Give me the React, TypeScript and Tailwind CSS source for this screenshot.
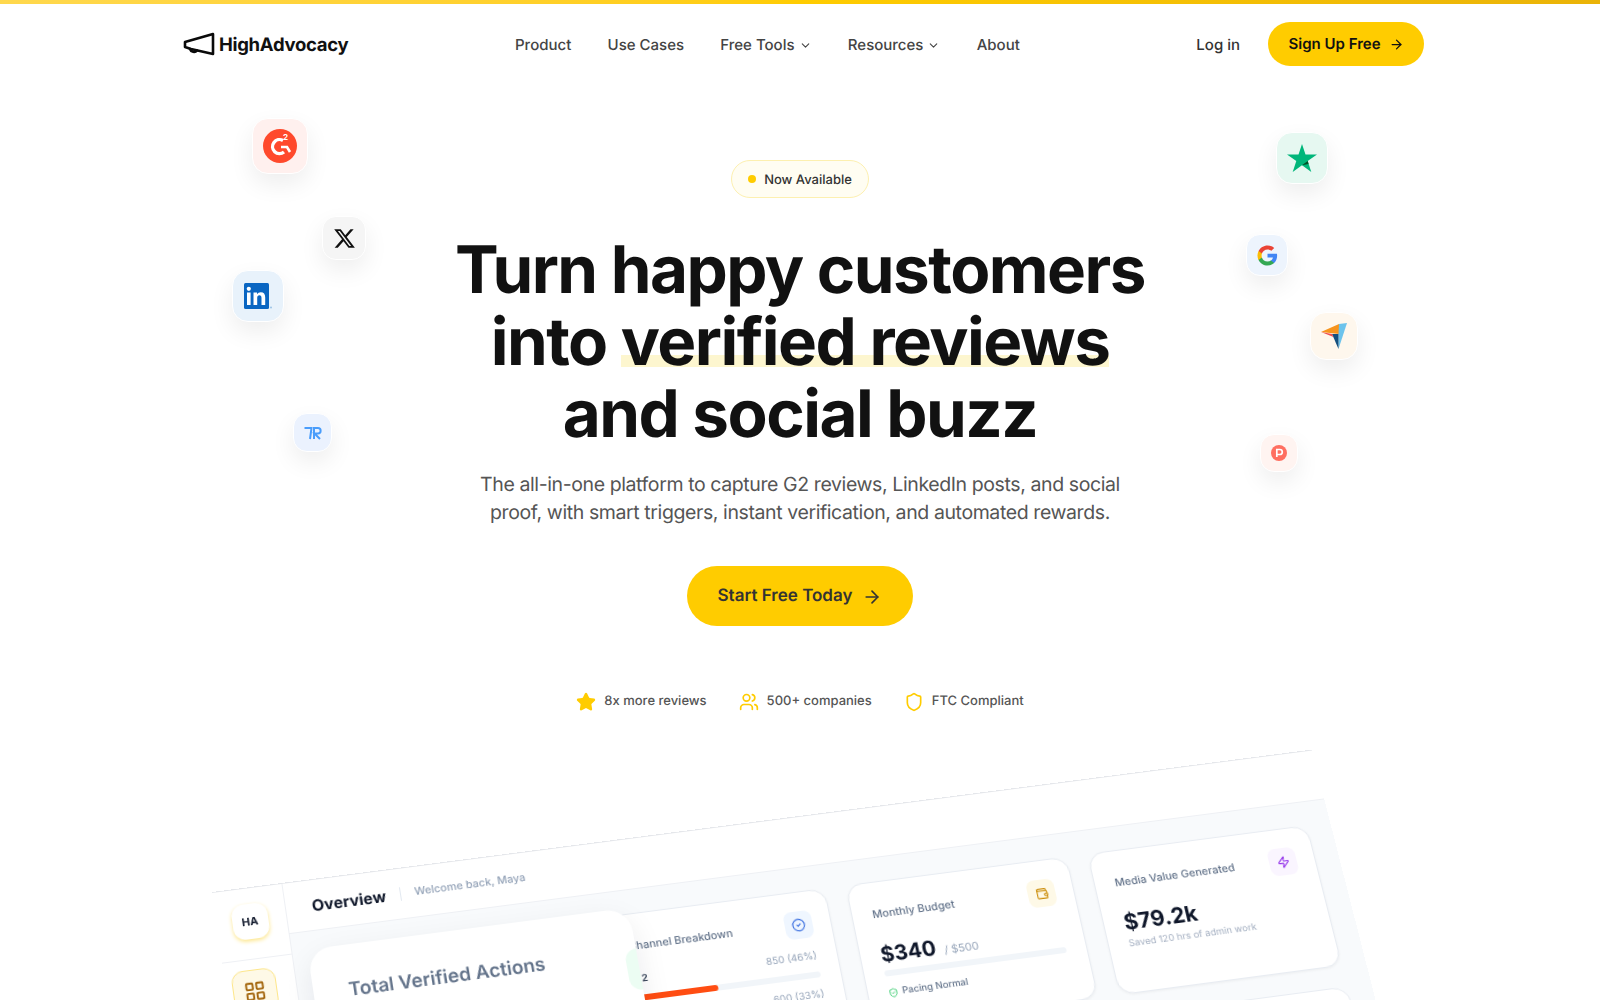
import React from "react";
import { ArrowRight, ChevronDown, Users, Shield, LayoutGrid, CircleCheck, Wallet, Zap, ShieldCheck, Star } from "lucide-react";

function Tile({ cls, children }: { cls: string; children: React.ReactNode }) {
  return (
    <div className={"absolute flex items-center justify-center border border-white shadow-[0_10px_25px_rgba(0,0,0,0.07)] " + cls}>
      {children}
    </div>
  );
}

function Card({ title, icon, iconBg, children }: { title: string; icon: React.ReactNode; iconBg: string; children: React.ReactNode }) {
  return (
    <div className="relative h-[146px] rounded-2xl border border-[#e8ecf2] bg-white px-5 pt-5 shadow-[0_1px_3px_rgba(0,0,0,0.05)]">
      <div className="flex items-start justify-between">
        <div className="pt-1 text-[11px] font-medium text-[#64748b]">{title}</div>
      </div>
      <div className={"absolute right-[18px] top-[19px] flex h-7 w-7 shrink-0 items-center justify-center rounded-lg " + iconBg}>{icon}</div>
      <div className="pt-[18px]">{children}</div>
    </div>
  );
}

function Dashboard() {
  return (
    <div className="h-[620px] w-[1126px] origin-top-left [transform:perspective(2400px)_rotateX(14deg)_rotateZ(-7.6deg)] border-t border-[#e5e7eb] bg-white">
      <div className="flex h-full">
        <div className="flex w-[71px] shrink-0 flex-col items-center border-r border-[#eef0f4]">
          <div className="flex w-full justify-center border-b border-[#eef0f4] pb-5 pr-[3px] pt-4">
            <div className="flex h-9 w-9 items-center justify-center rounded-xl bg-white text-[11px] font-bold text-[#0f172a] shadow-[0_2px_4px_#fde68a]">HA</div>
          </div>
          <div className="mr-[12px] mt-[10px] flex h-11 w-11 items-center justify-center rounded-xl border border-[#fde68a] bg-[#fef9e7]">
            <LayoutGrid size={22} className="text-[#a16207]" />
          </div>
        </div>
        <div className="flex-1">
          <div className="flex h-[52px] items-center border-b border-[#eef0f4] pl-[26px] pr-7">
            <span className="text-[16px] font-bold text-[#0f172a]">Overview</span>
            <span className="mx-[14px] h-3.5 w-px bg-[#e2e8f0]" />
            <span className="text-[11px] font-medium text-[#94a3b8]">Welcome back, Maya</span>
          </div>
          <div className="relative h-full bg-[#f8fafc] pl-[311px] pr-6 pt-6">
            <div className="grid grid-cols-3 gap-[21px]">
              <Card title="Channel Breakdown" iconBg="bg-[#eff6ff]" icon={<CircleCheck size={14} className="text-[#3b6fe0]" />}>
                <div className="flex justify-between text-[10px] text-[#94a3b8]">
                  <span className="font-semibold text-[#334155]">G2</span>
                  <span>850 (46%)</span>
                </div>
                <div className="mt-2 h-1.5 rounded-full bg-[#f1f5f9]"><div className="h-full w-[44%] rounded-full bg-[#ff4d12]" /></div>
                <div className="mt-2.5 text-right text-[10px] text-[#94a3b8]">600 (33%)</div>
              </Card>
              <Card title="Monthly Budget" iconBg="bg-[#fef9e7]" icon={<Wallet size={13} className="text-[#ca8a04]" />}>
                <div className="flex items-baseline gap-2">
                  <span className="text-[21px] font-bold text-[#0f172a]">$340</span>
                  <span className="text-[11px] text-[#94a3b8]">/ $500</span>
                </div>
                <div className="h-1.5 rounded-full bg-[#f1f5f9]" />
                <div className="mt-2.5 flex items-center gap-1 text-[9.5px] font-medium text-[#64748b]">
                  <ShieldCheck size={10} className="text-[#22c55e]" /> Pacing Normal
                </div>
              </Card>
              <Card title="Media Value Generated" iconBg="bg-[#faf5ff]" icon={<Zap size={13} className="text-[#9333ea]" />}>
                <div className="text-[22px] font-bold leading-[30px] text-[#0f172a]">$79.2k</div>
                <div className="text-[9.5px] text-[#a5b0c2]">Saved 120 hrs of admin work</div>
              </Card>
              <div className="h-[146px] rounded-2xl border border-[#e8ecf2] bg-white" />
              <div className="h-[146px] rounded-2xl border border-[#e8ecf2] bg-white" />
              <div className="h-[146px] rounded-2xl border border-[#e8ecf2] bg-white" />
            </div>
            <div className="absolute left-[15px] top-[18px] h-[400px] w-[324px] overflow-hidden rounded-3xl bg-white pl-[35px] pt-8 shadow-[0_10px_30px_rgba(15,23,42,0.08)]">
              <div className="text-[19px] font-semibold text-[#64748b]">Total Verified Actions</div>
              <div className="absolute right-0 top-[42px] h-[42px] w-3 rounded-l-xl bg-[#ecfdf3]" />
            </div>
          </div>
        </div>
      </div>
    </div>
  );
}

export default function App() {
  return (
    <div className="relative h-[1000px] w-full overflow-hidden bg-white font-['Inter',sans-serif] text-[#111111] antialiased [text-rendering:geometricPrecision]">
      <div className="h-1 bg-gradient-to-r from-[#ffd84d] via-[#ffcc00] to-[#eab308]" />
      <header className="ml-[183px] flex h-[80px] w-[1241px] items-center">
        <div className="flex w-[332px] items-center gap-1">
          <svg width="32" height="24" viewBox="0 0 32 24" fill="none" stroke="#0a0a0a" strokeWidth="2.6" strokeLinejoin="round" strokeLinecap="round">
            <path d="M30 2 L30 22 L8 17 L2 15 L2 10 Z" />
            <path d="M7 17 C8 20 12 21 14 18.5" />
          </svg>
          <span className="pt-[3px] text-[18.5px] font-bold tracking-[-0.3px] text-[#111]">HighAdvocacy</span>
        </div>
        <nav className="flex items-center gap-[36.3px] pt-[3px] text-[15px] font-medium text-[#444]">
          <span>Product</span>
          <span>Use Cases</span>
          <span className="flex items-center gap-1">Free Tools <ChevronDown size={13} /></span>
          <span className="flex items-center gap-1">Resources <ChevronDown size={13} /></span>
          <span>About</span>
        </nav>
        <div className="ml-auto flex items-center gap-7">
          <span className="pt-[3px] text-[15px] font-medium text-[#333]">Log in</span>
          <span className="flex h-11 w-[156px] items-center justify-center gap-2 rounded-full bg-[#ffcc00] pt-px text-[15px] font-semibold text-[#111]">
            Sign Up Free <ArrowRight size={15} />
          </span>
        </div>
      </header>

      <main className="flex flex-col items-center">
        <div className="mt-[76px] flex h-[38px] w-[138px] items-center justify-center gap-2 rounded-full border border-[#fdf0b0] bg-[#fffdf2] text-[13px] font-medium text-[#333]">
          <span className="h-2 w-2 rounded-full bg-[#ffcc00]" /> <span className="pt-[3px]">Now Available</span>
        </div>
        <h1 className="mt-9 text-center text-[65.5px] font-bold leading-[72px] tracking-[-1.5px] text-[#111]">
          Turn happy customers
          <br />
          into{" "}
          <span className="inline-block bg-[linear-gradient(transparent_68%,#fdf6cf_68%,#fdf6cf_85%,transparent_85%)]">verified reviews</span>
          <br />
          and social buzz
        </h1>
        <p className="mt-5 text-center text-[19.500px] leading-[28px] tracking-[-0.4px] text-[#555]">
          The all-in-one platform to capture G2 reviews, LinkedIn posts, and social
          <br />
          proof, with smart triggers, instant verification, and automated rewards.
        </p>
        <div className="mt-10 flex h-[60px] w-[226px] items-center justify-center gap-[10px] rounded-full bg-[#ffcc00] pt-0.5 text-[17px] font-semibold text-[#333]">
          Start Free Today <ArrowRight size={20} />
        </div>
        <div className="mt-[66px] flex items-center gap-8 text-[13px] font-medium text-[#555]">
          <span className="flex items-center gap-2"><Star size={20} className="fill-[#ffcc00] text-[#ffcc00]" /> 8x more reviews</span>
          <span className="flex items-center gap-2"><Users size={20} className="text-[#ffcc00]" /> 500+ companies</span>
          <span className="flex items-center gap-2"><Shield size={20} className="text-[#ffcc00]" /> FTC Compliant</span>
        </div>
      </main>

      <Tile cls="left-[252px] top-[118px] h-[56px] w-[56px] rounded-2xl bg-[#fff0ee]">
        <svg width="34" height="34" viewBox="0 0 34 34">
          <circle cx="17" cy="17" r="17" fill="#ff492c" />
          <path d="M20 11.5 A7 7 0 1 0 21 23" fill="none" stroke="#fff" strokeWidth="3.4" />
          <path d="M18 18 H24 L27 23" fill="none" stroke="#fff" strokeWidth="2.6" />
          <text x="20" y="11" fontSize="8" fontWeight="700" fill="#fff" fontFamily="Inter">2</text>
        </svg>
      </Tile>
      <Tile cls="left-[322px] top-[216px] h-[44px] w-[44px] rounded-[14px] bg-[#f5f5f5]">
        <svg width="23" height="23" viewBox="0 0 24 24" fill="#111">
          <path d="M18.24 2.25h3.31l-7.23 8.26 8.5 11.24h-6.66l-5.21-6.82-5.97 6.82H1.68l7.73-8.84L1.25 2.25h6.83l4.71 6.23zm-1.16 17.52h1.83L7.08 4.13H5.12z" />
        </svg>
      </Tile>
      <Tile cls="left-[232px] top-[270px] h-[52px] w-[52px] rounded-2xl bg-[#e8f2fb]">
        <svg width="30" height="28" viewBox="0 0 30 28">
          <rect x="1" y="1" width="25" height="26" rx="1.5" fill="#0a66c2" />
          <rect x="4" y="10.5" width="3.6" height="12.5" fill="#fff" />
          <circle cx="5.8" cy="6.8" r="2.1" fill="#fff" />
          <path d="M10.5 10.5H14v1.8c.8-1.3 2.1-2.1 3.8-2.1 3 0 4.4 1.9 4.4 5V23h-3.7v-7c0-1.7-.6-2.7-2-2.7-1.5 0-2.3 1-2.3 2.8V23h-3.7z" fill="#fff" />
          <circle cx="28" cy="25.5" r="1" fill="#9dc3e6" />
        </svg>
      </Tile>
      <Tile cls="left-[293px] top-[413px] h-[39px] w-[39px] rounded-[14px] bg-[#ebf2fe]">
        <svg width="18" height="14" viewBox="0 0 18 14" fill="none" stroke="#4a9dfb" strokeWidth="2">
          <path d="M0.5 2 H7.5 L6 13" />
          <path d="M10 13 V2 H14 C17.5 2 17.5 7.5 14 7.5 H10.5 L16 13" />
        </svg>
      </Tile>
      <Tile cls="left-[1276px] top-[132px] h-[52px] w-[52px] rounded-2xl bg-[#e6f8f1]">
        <svg width="30" height="28" viewBox="0 0 30 28">
          <path d="M15 0 L18.5 10.5 L30 10.5 L20.7 17 L24.3 28 L15 21.2 L5.7 28 L9.3 17 L0 10.5 L11.5 10.5 Z" fill="#00b67a" />
          <path d="M20.7 17 L21.6 20 L15 21.2 Z" fill="#005128" />
        </svg>
      </Tile>
      <Tile cls="left-[1246px] top-[234px] h-[42px] w-[42px] rounded-[14px] bg-[#edf4fd]">
        <svg width="21" height="21" viewBox="0 0 24 24">
          <path d="M23 12.3c0-.8-.1-1.6-.2-2.3H12v4.4h6.2c-.3 1.4-1.1 2.6-2.3 3.4v2.8h3.7c2.2-2 3.4-5 3.4-8.3z" fill="#4285f4" />
          <path d="M12 23.5c3.1 0 5.7-1 7.6-2.8l-3.7-2.9c-1 .7-2.3 1.1-3.9 1.1-3 0-5.5-2-6.4-4.7H1.8v2.9c1.9 3.8 5.8 6.4 10.2 6.4z" fill="#34a853" />
          <path d="M5.6 14.2c-.5-1.4-.5-3 0-4.4V6.9H1.8a11.5 11.5 0 0 0 0 10.2z" fill="#fbbc05" />
          <path d="M12 5c1.7 0 3.2.6 4.4 1.7l3.3-3.3C17.7 1.6 15.100 .5 12 .5 7.600 .5 3.700 3.100 1.800 6.900l3.800 2.900C6.500 7 9 5 12 5z" fill="#ea4335" />
        </svg>
      </Tile>
      <Tile cls="left-[1310px] top-[312px] h-[48px] w-[48px] rounded-2xl bg-[#fef7ed]">
        <svg width="27" height="27" viewBox="0 0 27 27">
          <path d="M0 9 L18 1 L18 11 Z" fill="#f7941d" />
          <path d="M18 1 L26 0 L17.500 26 L17.500 11 Z" fill="#6cc3ec" />
          <path d="M11 11 L17.500 11 L17.500 26 Z" fill="#14507f" />
          <path d="M0 9 L11 11 L12.500 14 Z" fill="#ef4f4f" />
        </svg>
      </Tile>
      <Tile cls="left-[1260px] top-[434px] h-[38px] w-[38px] rounded-[14px] bg-[#fff4f1]">
        <svg width="16" height="16" viewBox="0 0 16 16">
          <circle cx="8" cy="8" r="8" fill="#ff6f61" />
          <path d="M5.800 12V4.500h3a2.500 2.500 0 0 1 0 5H5.800" fill="none" stroke="#fff" strokeWidth="1.700" />
        </svg>
      </Tile>

      <div className="absolute left-[212px] top-[892px]">
        <Dashboard />
      </div>
    </div>
  );
}
